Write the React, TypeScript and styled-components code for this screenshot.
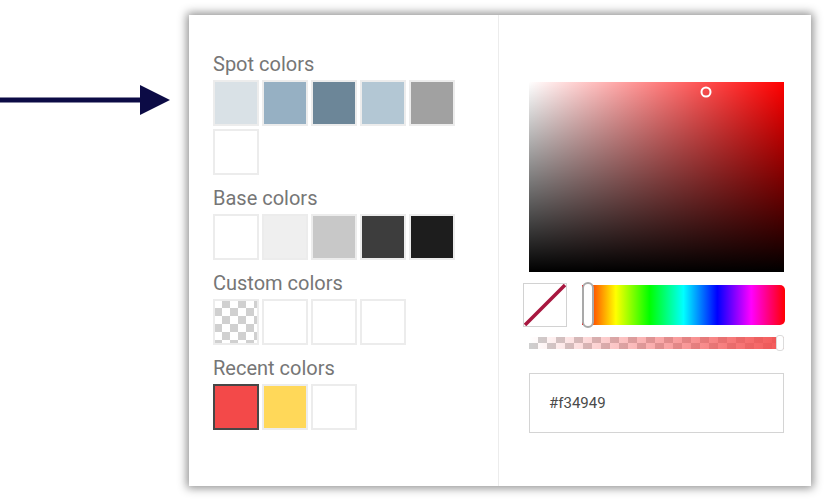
import styled, { createGlobalStyle } from "styled-components";

const GlobalStyle = createGlobalStyle`
  body {
    margin: 0;
    background: #ffffff;
    font-family: Roboto, "Liberation Sans", sans-serif;
  }
`;

const Page = styled.div`
  display: flex;
  align-items: flex-start;
  padding-top: 15px;
  width: 828px;
  height: 502px;
  box-sizing: border-box;
`;

const ArrowWrap = styled.div`
  width: 170px;
  height: 32px;
  margin-top: 69px;
  flex-shrink: 0;
`;

const Card = styled.div`
  display: flex;
  width: 622px;
  height: 471px;
  margin-left: 19px;
  background: #ffffff;
  box-shadow: 0 0 9px 2px rgba(0, 0, 0, 0.45);
`;

const LeftCol = styled.div`
  width: 310px;
  padding: 37px 0 0 24px;
  box-sizing: border-box;
  border-right: 1px solid #ececec;
`;

const Section = styled.div`
  & + & {
    margin-top: 11px;
  }
`;

const Label = styled.div`
  font-size: 20px;
  line-height: 24px;
  color: #767676;
  margin-bottom: 4px;
`;

const Swatches = styled.div`
  display: grid;
  grid-template-columns: repeat(5, 46px);
  gap: 3px;
`;

const Swatch = styled.div<{ $color: string; $selected?: boolean; $checker?: boolean }>`
  width: 46px;
  height: 46px;
  box-sizing: border-box;
  border: 2px solid ${(p) => (p.$selected ? "#474747" : "#ececec")};
  background: ${(p) =>
    p.$checker
      ? "repeating-conic-gradient(#d0d0d0 0% 25%, #ffffff 0% 50%) -1px -1px / 16px 16px"
      : p.$color};
`;

const RightCol = styled.div`
  flex: 1;
  padding: 67px 26px 0 30px;
  box-sizing: border-box;
  display: flex;
  flex-direction: column;
`;

const SatBox = styled.div`
  position: relative;
  width: 255px;
  height: 190px;
  background:
    linear-gradient(to top, #000 0%, rgba(0, 0, 0, 0) 100%),
    linear-gradient(to right, #fff 0%, rgba(255, 255, 255, 0) 100%),
    #ff0000;
`;

const SatMarker = styled.div`
  position: absolute;
  left: 177px;
  top: 10px;
  width: 11px;
  height: 11px;
  box-sizing: border-box;
  border: 2px solid #ffffff;
  border-radius: 50%;
  transform: translate(-50%, -50%);
`;

const HueRow = styled.div`
  display: flex;
  align-items: center;
  gap: 15px;
  margin: 11px 0 0 -6px;
`;

const Preview = styled.div`
  width: 44px;
  height: 44px;
  box-sizing: border-box;
  border: 1px solid #d2d2d2;
  flex-shrink: 0;
`;

const HueTrack = styled.div`
  position: relative;
  flex: 1;
  height: 40px;
  border-radius: 0 5px 5px 0;
  background: linear-gradient(
    to right,
    #ff0000 0%,
    #ffff00 16.67%,
    #00ff00 33.33%,
    #00ffff 50%,
    #0000ff 66.67%,
    #ff00ff 83.33%,
    #ff0000 100%
  );
`;

const HueThumb = styled.div`
  position: absolute;
  left: 0;
  top: -3px;
  width: 12px;
  height: 46px;
  box-sizing: border-box;
  background: #ffffff;
  border: 2px solid #a9a9a9;
  border-radius: 6px;
`;

const AlphaTrack = styled.div`
  position: relative;
  margin-top: 10px;
  width: 255px;
  height: 12px;
  background:
    linear-gradient(to right, rgba(243, 73, 73, 0) 0%, rgba(243, 73, 73, 0.92) 100%),
    repeating-conic-gradient(#cfcfcf 0% 25%, #ffffff 0% 50%) 0 0 / 18px 12px;
`;

const AlphaThumb = styled.div`
  position: absolute;
  right: 0;
  top: -2px;
  width: 8px;
  height: 16px;
  box-sizing: border-box;
  background: #ffffff;
  border: 1px solid #dcdcdc;
  border-radius: 3px;
`;

const HexInput = styled.div`
  margin-top: 24px;
  width: 255px;
  height: 60px;
  box-sizing: border-box;
  border: 1px solid #d4d4d4;
  display: flex;
  align-items: center;
  padding-left: 19px;
  font-size: 15px;
  font-weight: 400;
  color: #4a4a4a;
`;

const spot = ["#d9e1e6", "#96b0c3", "#6c8698", "#b3c7d4", "#a1a1a1", "#ffffff"];
const base = ["#ffffff", "#efefef", "#c8c8c8", "#3d3d3d", "#1d1d1d"];

const App = () => {
  return (
    <>
      <GlobalStyle />
      <Page>
        <ArrowWrap>
          <svg width="170" height="32" viewBox="0 0 170 32">
            <rect x="0" y="13.5" width="143" height="5" fill="#0c0b45" />
            <polygon points="140,1 170,16 140,31" fill="#0c0b45" />
          </svg>
        </ArrowWrap>
        <Card>
          <LeftCol>
            <Section>
              <Label>Spot colors</Label>
              <Swatches>
                {spot.map((c, i) => (
                  <Swatch key={i} $color={c} />
                ))}
              </Swatches>
            </Section>
            <Section>
              <Label>Base colors</Label>
              <Swatches>
                {base.map((c, i) => (
                  <Swatch key={i} $color={c} />
                ))}
              </Swatches>
            </Section>
            <Section>
              <Label>Custom colors</Label>
              <Swatches>
                <Swatch $color="#ffffff" $checker />
                <Swatch $color="#ffffff" />
                <Swatch $color="#ffffff" />
                <Swatch $color="#ffffff" />
              </Swatches>
            </Section>
            <Section>
              <Label>Recent colors</Label>
              <Swatches>
                <Swatch $color="#f34949" $selected />
                <Swatch $color="#ffd859" />
                <Swatch $color="#ffffff" />
              </Swatches>
            </Section>
          </LeftCol>
          <RightCol>
            <SatBox>
              <SatMarker />
            </SatBox>
            <HueRow>
              <Preview>
                <svg width="42" height="42" viewBox="0 0 42 42">
                  <line x1="1" y1="41" x2="41" y2="1" stroke="#a8173f" strokeWidth="3.5" />
                </svg>
              </Preview>
              <HueTrack>
                <HueThumb />
              </HueTrack>
            </HueRow>
            <AlphaTrack>
              <AlphaThumb />
            </AlphaTrack>
            <HexInput>#f34949</HexInput>
          </RightCol>
        </Card>
      </Page>
    </>
  );
};

export default App;
